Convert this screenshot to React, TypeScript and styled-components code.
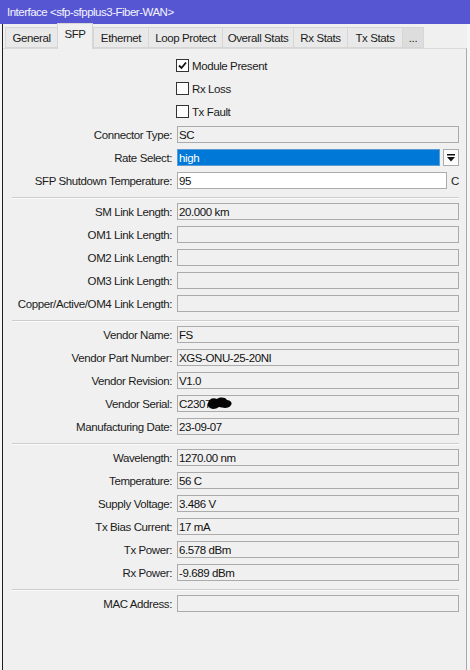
import React from 'react'
import styled, { createGlobalStyle } from 'styled-components'

const GlobalStyle = createGlobalStyle`
  html, body {
    margin: 0;
    padding: 0;
    background: #f6f6f6;
  }
  body {
    font-family: "Liberation Sans", Arial, sans-serif;
    font-size: 11.5px;
    letter-spacing: -0.4px;
    color: #1b1b1b;
  }
`

const Window = styled.div`
  width: 470px;
  height: 670px;
  display: flex;
  flex-direction: column;
  overflow: hidden;
`

const TitleBar = styled.div`
  height: 24px;
  flex: none;
  display: flex;
  align-items: center;
  padding-left: 7px;
  background: #5656d3;
  color: #f4f4ff;
  letter-spacing: -0.5px;
`

const Body = styled.div`
  flex: 1;
  display: flex;
  flex-direction: column;
  margin-left: 2px;
  margin-right: 3px;
  background: #f0f0f0;
  border-left: 1px solid #1f1f1f;
`

const TabStrip = styled.div`
  height: 24px;
  flex: none;
  display: flex;
  align-items: flex-end;
  padding-left: 2px;
  position: relative;
  z-index: 1;
`

const Tab = styled.div<{ $active?: boolean; $muted?: boolean; $w: number }>`
  box-sizing: border-box;
  width: ${p => p.$w}px;
  height: ${p => (p.$active ? 26 : 21)}px;
  margin-bottom: ${p => (p.$active ? -1 : 0)}px;
  padding-bottom: ${p => (p.$active ? 5 : 0)}px;
  display: flex;
  align-items: center;
  justify-content: center;
  white-space: nowrap;
  color: #1b1b1b;
  background: ${p => (p.$active ? '#f0f0f0' : p.$muted ? '#dddddd' : '#e9e9e9')};
  border: 1px solid #d6d6d6;
  border-bottom: ${p => (p.$active ? 'none' : '1px solid #d6d6d6')};
  margin-right: ${p => (p.$active ? 0 : -1)}px;
`

const Panel = styled.div`
  flex: 1;
  border-top: 1px solid #d9d9d9;
  border-right: 1px solid #a9a9a9;
  padding: 5px 7px 0 0;
`

const Row = styled.div`
  display: grid;
  grid-template-columns: 169px 1fr;
  column-gap: 5px;
  align-items: center;
  height: 23px;
`

const Label = styled.div`
  text-align: right;
  white-space: nowrap;
`

const FieldLine = styled.div`
  display: flex;
  align-items: center;
  gap: 3px;
`

const Field = styled.div<{ $tone?: 'plain' | 'edit' | 'picked' }>`
  flex: 1;
  box-sizing: border-box;
  height: 17px;
  display: flex;
  align-items: center;
  padding-left: 1px;
  white-space: nowrap;
  overflow: hidden;
  color: ${p => (p.$tone === 'picked' ? '#ffffff' : '#111')};
  background: ${p =>
    p.$tone === 'picked' ? '#0078d7' : p.$tone === 'edit' ? '#ffffff' : '#f0f0f0'};
  border: 1px solid ${p => (p.$tone === 'picked' ? '#5d9bd6' : '#ababab')};
`

const DropButton = styled.div`
  box-sizing: border-box;
  width: 16px;
  height: 17px;
  flex: none;
  display: flex;
  align-items: center;
  justify-content: center;
  background: #fbfbfb;
  border: 1px solid #ababab;
`

const Unit = styled.span`
  width: 8px;
  flex: none;
  padding-left: 1px;
`

const CheckRow = styled.label`
  grid-column: 2;
  display: flex;
  align-items: center;
  gap: 3px;
  margin-left: -1px;
`

const Box = styled.span`
  box-sizing: border-box;
  width: 13px;
  height: 13px;
  display: flex;
  align-items: center;
  justify-content: center;
  background: #ffffff;
  border: 1px solid #333;
`

const Separator = styled.div`
  height: 8px;
  margin-left: 9px;
  display: flex;
  align-items: flex-end;
  padding-bottom: 1px;
  box-sizing: border-box;

  &::before {
    content: '';
    flex: 1;
    border-top: 1px solid #cdcdcd;
    border-bottom: 1px solid #fbfbfb;
  }
`

const Scribble = styled.svg`
  margin-left: -4px;
  flex: none;
`

const tabs = [
  { name: 'General', w: 53 },
  { name: 'SFP', w: 36 },
  { name: 'Ethernet', w: 56 },
  { name: 'Loop Protect', w: 75 },
  { name: 'Overall Stats', w: 72 },
  { name: 'Rx Stats', w: 55 },
  { name: 'Tx Stats', w: 56 },
  { name: '...', w: 22 },
]

type Item = { label: string; value?: React.ReactNode } | 'sep'

const sections: Item[] = [
  'sep',
  { label: 'SM Link Length:', value: '20.000 km' },
  { label: 'OM1 Link Length:' },
  { label: 'OM2 Link Length:' },
  { label: 'OM3 Link Length:' },
  { label: 'Copper/Active/OM4 Link Length:' },
  'sep',
  { label: 'Vendor Name:', value: 'FS' },
  { label: 'Vendor Part Number:', value: 'XGS-ONU-25-20NI' },
  { label: 'Vendor Revision:', value: 'V1.0' },
  {
    label: 'Vendor Serial:',
    value: (
      <>
        C2307
        <Scribble width="26" height="15" viewBox="0 0 26 15">
          <path
            d="M1 7 C2 3 6 1 10 3 C13 1 18 1 20 4 C23 4 26 7 24 9 C22 13 16 12 12 11 C8 14 3 13 2 11 C0 10 0 8 1 7 Z"
            fill="#050505"
          />
        </Scribble>
      </>
    ),
  },
  { label: 'Manufacturing Date:', value: '23-09-07' },
  'sep',
  { label: 'Wavelength:', value: '1270.00 nm' },
  { label: 'Temperature:', value: '56 C' },
  { label: 'Supply Voltage:', value: '3.486 V' },
  { label: 'Tx Bias Current:', value: '17 mA' },
  { label: 'Tx Power:', value: '6.578 dBm' },
  { label: 'Rx Power:', value: '-9.689 dBm' },
  'sep',
  { label: 'MAC Address:' },
]

const Check = ({ on, text }: { on?: boolean; text: string }) => (
  <Row>
    <CheckRow>
      <Box>
        {on && (
          <svg width="9" height="9" viewBox="0 0 9 9">
            <path d="M1 4.5 L3.5 7 L8 1.5" stroke="#111" strokeWidth="1.8" fill="none" />
          </svg>
        )}
      </Box>
      {text}
    </CheckRow>
  </Row>
)

export default function App() {
  return (
    <>
      <GlobalStyle />
      <Window>
        <TitleBar>Interface &lt;sfp-sfpplus3-Fiber-WAN&gt;</TitleBar>
        <Body>
          <TabStrip>
            {tabs.map(t => (
              <Tab key={t.name} $w={t.w} $active={t.name === 'SFP'} $muted={t.name === '...'}>
                {t.name}
              </Tab>
            ))}
          </TabStrip>
          <Panel>
            <Check on text="Module Present" />
            <Check text="Rx Loss" />
            <Check text="Tx Fault" />
            <Row>
              <Label>Connector Type:</Label>
              <Field>SC</Field>
            </Row>
            <Row>
              <Label>Rate Select:</Label>
              <FieldLine>
                <Field $tone="picked">high</Field>
                <DropButton>
                  <svg width="8" height="8" viewBox="0 0 8 8">
                    <rect x="0" y="0" width="8" height="1.5" fill="#111" />
                    <path d="M0 3 H8 L4 7.5 Z" fill="#111" />
                  </svg>
                </DropButton>
              </FieldLine>
            </Row>
            <Row>
              <Label>SFP Shutdown Temperature:</Label>
              <FieldLine>
                <Field $tone="edit">95</Field>
                <Unit>C</Unit>
              </FieldLine>
            </Row>
            {sections.map((s, i) =>
              s === 'sep' ? (
                <Separator key={i} />
              ) : (
                <Row key={i}>
                  <Label>{s.label}</Label>
                  <Field>{s.value}</Field>
                </Row>
              )
            )}
          </Panel>
        </Body>
      </Window>
    </>
  )
}
